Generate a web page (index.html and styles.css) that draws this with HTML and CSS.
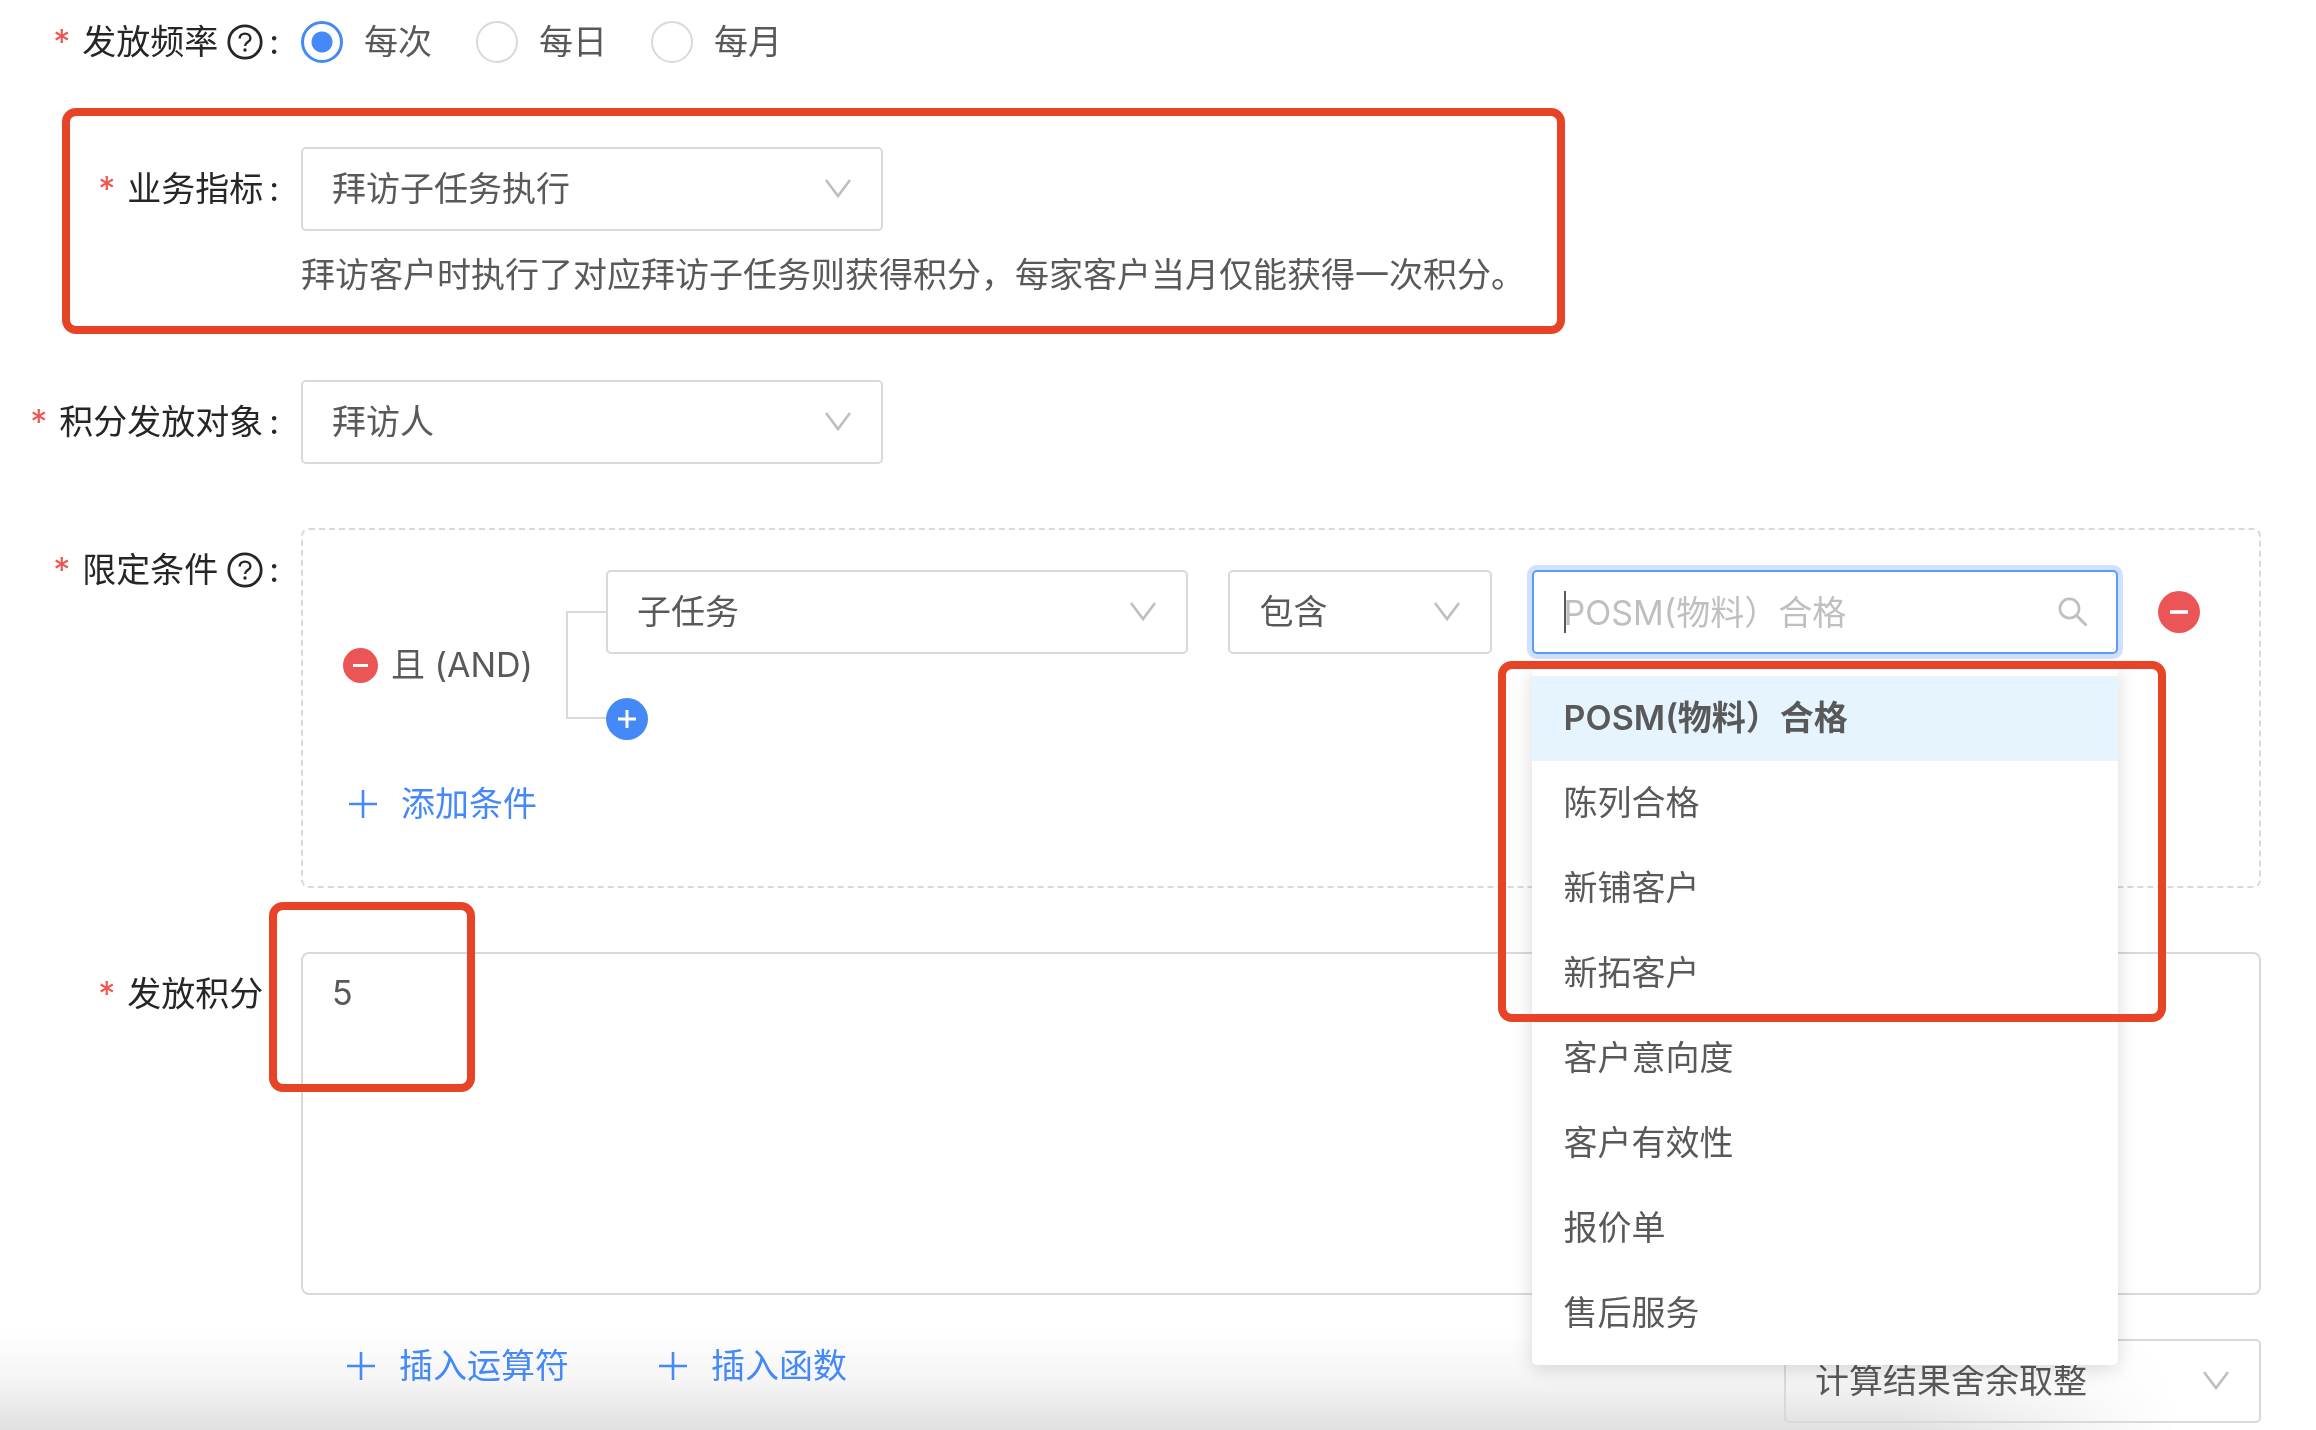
FILE: index.html
```html
<!DOCTYPE html>
<html lang="zh-CN">
<head>
<meta charset="utf-8">
<meta name="viewport" content="width=device-width, initial-scale=1">
<title>积分规则</title>
<link rel="stylesheet" href="styles.css">
</head>
<body>
<svg class="sprite" aria-hidden="true">
  <symbol id="chevron" viewBox="0 0 28 28"><path d="M2 5 L14 21 L26 5" fill="none" stroke="currentColor" stroke-width="2.6"/></symbol>
  <symbol id="plus" viewBox="0 0 28 28"><path d="M14 0V28M0 14H28" fill="none" stroke="currentColor" stroke-width="2.6"/></symbol>
  <symbol id="minus-circle" viewBox="0 0 42 42"><circle cx="21" cy="21" r="21" fill="currentColor"/><path d="M12 21H30" stroke="#fff" stroke-width="3.6"/></symbol>
  <symbol id="plus-circle" viewBox="0 0 42 42"><circle cx="21" cy="21" r="21" fill="currentColor"/><path d="M12 21H30M21 12V30" stroke="#fff" stroke-width="3"/></symbol>
  <symbol id="question" viewBox="0 0 36 36"><circle cx="18" cy="18" r="16.2" fill="none" stroke="currentColor" stroke-width="2.8"/><path d="M12.6 14.6C12.6 11.4 15 9.6 18 9.6S23.4 11.5 23.4 14.4C23.4 18 18 18 18 22" fill="none" stroke="currentColor" stroke-width="2.4"/><circle cx="18" cy="26" r="1.7" fill="currentColor"/></symbol>
  <symbol id="search" viewBox="0 0 30 30"><circle cx="11.5" cy="11.5" r="9.6" fill="none" stroke="currentColor" stroke-width="2.6"/><path d="M18.5 18.5L28.5 28.5" stroke="currentColor" stroke-width="3"/></symbol>
</svg>

<form class="form">
  <div class="row" role="radiogroup" aria-labelledby="freq-label">
    <div class="label" id="freq-label"><span class="req">*</span>发放频率<svg class="help"><use href="#question"/></svg><span class="colon">:</span></div>
    <div class="radios">
      <label class="radio"><input type="radio" name="freq" checked>每次</label>
      <label class="radio"><input type="radio" name="freq">每日</label>
      <label class="radio"><input type="radio" name="freq">每月</label>
    </div>
  </div>

  <div class="row">
    <label class="label" for="metric"><span class="req">*</span>业务指标<span class="colon">:</span></label>
    <div class="field">
      <div class="select medium"><select id="metric"><option>拜访子任务执行</option></select><svg><use href="#chevron"/></svg></div>
      <p class="hint">拜访客户时执行了对应拜访子任务则获得积分，每家客户当月仅能获得一次积分。</p>
    </div>
    <div class="mark mark-metric"></div>
  </div>

  <div class="row">
    <label class="label" for="target"><span class="req">*</span>积分发放对象<span class="colon">:</span></label>
    <div class="field">
      <div class="select medium"><select id="target"><option>拜访人</option></select><svg><use href="#chevron"/></svg></div>
    </div>
  </div>

  <div class="row row-conditions">
    <div class="label"><span class="req">*</span>限定条件<svg class="help"><use href="#question"/></svg><span class="colon">:</span></div>
    <div class="conditions">
      <div class="group">
        <div class="logic">
          <button type="button" class="icon-btn danger small" aria-label="删除条件组"><svg><use href="#minus-circle"/></svg></button>
          <span class="logic-name">且 (AND)</span>
          <div class="bracket"></div>
        </div>
        <div class="rules">
          <div class="rule">
            <div class="select rule-field"><select aria-label="字段"><option>子任务</option></select><svg><use href="#chevron"/></svg></div>
            <div class="select rule-op"><select aria-label="运算"><option>包含</option></select><svg><use href="#chevron"/></svg></div>
            <div class="search rule-value">
              <input type="text" placeholder="POSM(物料）合格" aria-label="值">
              <span class="caret"></span>
              <svg><use href="#search"/></svg>
              <ul class="menu" role="listbox">
                <li class="active" role="option" aria-selected="true">POSM(物料）合格</li>
                <li role="option">陈列合格</li>
                <li role="option">新铺客户</li>
                <li role="option">新拓客户</li>
                <li role="option">客户意向度</li>
                <li role="option">客户有效性</li>
                <li role="option">报价单</li>
                <li role="option">售后服务</li>
              </ul>
              <div class="mark mark-menu"></div>
            </div>
            <button type="button" class="icon-btn danger" aria-label="删除条件"><svg><use href="#minus-circle"/></svg></button>
          </div>
          <button type="button" class="icon-btn primary" aria-label="新增条件"><svg><use href="#plus-circle"/></svg></button>
        </div>
      </div>
      <button type="button" class="link-btn"><svg><use href="#plus"/></svg>添加条件</button>
    </div>
  </div>

  <div class="row">
    <label class="label" for="points"><span class="req">*</span>发放积分<span class="colon">:</span></label>
    <div class="field">
      <textarea id="points" class="formula">5</textarea>
      <div class="tools">
        <button type="button" class="link-btn"><svg><use href="#plus"/></svg>插入运算符</button>
        <button type="button" class="link-btn"><svg><use href="#plus"/></svg>插入函数</button>
        <div class="select rounding"><select aria-label="取整方式"><option>计算结果舍余取整</option></select><svg><use href="#chevron"/></svg></div>
      </div>
      <div class="mark mark-points"></div>
    </div>
  </div>
</form>
<div class="shade"></div>
</body>
</html>
```
FILE: styles.css
```css
:root {
  --text: #595959;
  --title: #262626;
  --line: #d9d9d9;
  --blue: #4489f7;
  --red: #eb5555;
  --mark: #e64327;
}

* { box-sizing: border-box; }

body {
  margin: 0;
  min-height: 100vh;
  background: #fff;
  color: var(--text);
  font: 34px/50px Inter, "Noto Sans CJK SC", sans-serif;
}

button, select, input, textarea { font: inherit; color: inherit; margin: 0; }
button { border: 0; padding: 0; background: none; cursor: pointer; }
.sprite { display: none; }

.form {
  display: flex;
  flex-direction: column;
  gap: 64px;
  padding-right: 55px;
}

.row {
  position: relative;
  display: grid;
  grid-template-columns: 301px minmax(0, 1fr);
}
.row:first-child { height: 83px; }
.row-conditions { z-index: 2; }

.label {
  display: flex;
  justify-content: flex-end;
  align-items: center;
  height: 84px;
  padding-right: 22px;
  color: var(--title);
  white-space: nowrap;
}
.req { margin-right: 12px; color: #f0564f; }
.help { width: 36px; height: 36px; margin-left: 9px; }
.colon { margin-left: 6px; }

.radios { display: flex; gap: 44px; height: 84px; }
.radio { display: flex; align-items: center; gap: 21px; }
.radio input {
  appearance: none;
  width: 42px;
  height: 42px;
  border: 2px solid var(--line);
  border-radius: 50%;
}
.radio input:checked {
  border: 3px solid var(--blue);
  background: radial-gradient(circle, var(--blue) 10px, transparent 11px);
}

.field { position: relative; min-width: 0; }

.select { display: grid; align-items: center; }
.select > * { grid-area: 1 / 1; }
.select select {
  appearance: none;
  width: 100%;
  height: 84px;
  padding: 0 80px 0 29px;
  border: 2px solid var(--line);
  border-radius: 5px;
  background: transparent;
}
.select svg {
  justify-self: end;
  width: 28px;
  height: 28px;
  margin-right: 31px;
  color: #bfbfbf;
  pointer-events: none;
}
.medium { max-width: 582px; }
.hint { margin: 19px 0 16px; white-space: nowrap; }

.conditions {
  padding: 40px 59px 57px 40px;
  border: 2px dashed var(--line);
  border-radius: 8px;
}
.group { display: flex; }
.logic {
  flex: 0 0 263px;
  display: flex;
  align-items: center;
  padding: 41px 0 21px;
}
.logic-name { flex: 1; margin-left: 13px; white-space: nowrap; }
.bracket {
  align-self: stretch;
  width: 40px;
  border: 2px solid var(--line);
  border-right: 0;
}
.rules {
  flex: 1;
  min-width: 0;
  display: flex;
  flex-direction: column;
  align-items: flex-start;
  gap: 44px;
}
.rule { display: flex; align-items: center; gap: 40px; width: 100%; }
.rule-field { flex: 582 1 0; }
.rule-op { flex: 263 1 0; }
.rule-value { flex: 586 1 0; }

.icon-btn { flex: none; width: 42px; height: 42px; }
.icon-btn svg { display: block; width: 100%; height: 100%; }
.small { width: 35px; height: 35px; }
.danger { color: var(--red); }
.primary { color: var(--blue); }

.search { position: relative; display: grid; align-items: center; }
.search > input, .search > svg, .caret { grid-area: 1 / 1; }
.search input {
  width: 100%;
  height: 84px;
  padding: 0 80px 0 30px;
  border: 2px solid #5a9cf8;
  border-radius: 5px;
  box-shadow: 0 0 0 5px rgba(68, 137, 247, .25);
  background: #fff;
}
.search input::placeholder { color: #bfbfbf; opacity: 1; }
.search > svg {
  justify-self: end;
  width: 30px;
  height: 30px;
  margin-right: 30px;
  color: #bfbfbf;
}
.caret { width: 2px; height: 42px; margin-left: 32px; background: var(--text); }

.menu {
  position: absolute;
  z-index: 1;
  top: 97px;
  left: 0;
  right: 0;
  margin: 0;
  padding: 9px 0;
  list-style: none;
  background: #fff;
  border-radius: 5px;
  box-shadow: 0 4px 20px rgba(0, 0, 0, .15);
}
.menu li { padding: 17px 32px 18px; white-space: nowrap; }
.menu .active { background: #e6f4fe; font-weight: 600; }

.link-btn {
  display: flex;
  align-items: center;
  gap: 24px;
  color: var(--blue);
  white-space: nowrap;
}
.link-btn svg { width: 28px; height: 28px; }
.conditions .link-btn { margin: 39px 0 0 6px; }

.formula {
  display: block;
  width: 100%;
  height: 343px;
  padding: 14px 29px;
  border: 2px solid var(--line);
  border-radius: 8px;
  background: transparent;
  resize: none;
}
.tools {
  display: flex;
  align-items: flex-start;
  gap: 90px;
  margin-top: 44px;
  padding-left: 46px;
}
.tools .link-btn { padding-top: 2px; }
.tools .rounding { width: 477px; margin-left: auto; }

/* red call-out frames */
.mark {
  position: absolute;
  z-index: 3;
  border: 8px solid var(--mark);
  border-radius: 14px;
  pointer-events: none;
}
.mark-metric { top: -39px; left: 62px; width: 1503px; bottom: -18px; }
.mark-menu { top: 91px; left: -34px; right: -48px; height: 361px; }
.mark-points { top: -50px; left: -32px; width: 206px; height: 190px; }

/* shadow of the bar below the fold */
.shade {
  position: fixed;
  z-index: -1;
  left: 0;
  right: 0;
  bottom: 0;
  height: 100px;
  background: linear-gradient(to bottom, rgba(0, 0, 0, 0), rgba(0, 0, 0, .04) 50%, rgba(0, 0, 0, .12));
  mask-image: linear-gradient(to right, #000 82%, transparent 94%);
  pointer-events: none;
}
```
